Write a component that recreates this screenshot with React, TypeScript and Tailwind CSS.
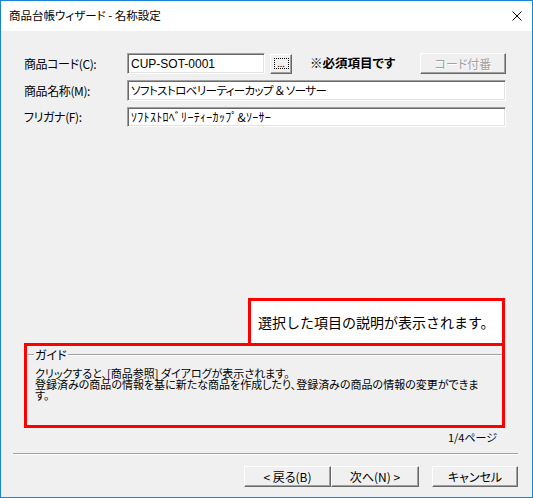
// 立体ボタン（Windows クラシック風）
const WinButton = ({ label, className = '', disabled = false }: { label: string; className?: string; disabled?: boolean }) => (
	<div
		className={`flex items-center justify-center h-[21px] bg-[#f0f0f0] border border-t-white border-l-white border-r-[#696969] border-b-[#696969] shadow-[inset_-1px_-1px_0_#a0a0a0] ${
			disabled ? 'text-[#a0a0a0] [text-shadow:1px_1px_0_#ffffff]' : 'text-black'
		} ${className}`}
	>
		{label}
	</div>
);

// 凹んだ入力欄
const Field = ({ value, className = '' }: { value: string; className?: string }) => (
	<div
		className={`flex items-center bg-white border border-t-[#a0a0a0] border-l-[#a0a0a0] border-r-white border-b-white shadow-[inset_1px_1px_0_#696969,inset_-1px_-1px_0_#e3e3e3] pl-[3px] whitespace-nowrap overflow-hidden ${className}`}
	>
		{value}
	</div>
);

const App = () => {
	return (
		<div className="w-[533px] h-[498px] flex flex-col border border-[#1883d7] bg-[#f0f0f0] text-[12px] text-black font-['Noto_Sans_CJK_JP',sans-serif] [font-feature-settings:'palt'] leading-none">
			{/* タイトルバー */}
			<header className="h-[30px] shrink-0 bg-white flex items-center justify-between pl-[8px] pr-[10px]">
				<span className="text-[11.5px]">商品台帳ウィザード - 名称設定</span>
				<svg width="10" height="10" viewBox="0 0 10 10" className="stroke-black">
					<path d="M0.5 0.5 L9.5 9.5 M9.5 0.5 L0.5 9.5" strokeWidth="1" />
				</svg>
			</header>

			<main className="flex-1 flex flex-col pl-[12px] pr-[14px] pb-[10px]">
				<section className="flex-1 flex flex-col ml-[11px] mr-[12px] pt-[22px]">
					<div className="flex items-center h-[21px]">
						<span className="w-[103px] tracking-[-0.4px]">商品コード(C):</span>
						<Field value="CUP-SOT-0001" className="w-[138px] h-[21px] font-['Liberation_Sans',sans-serif]" />
						<div className="ml-[5px] w-[22px] h-[20px] flex items-center justify-center bg-[#f0f0f0] border border-t-white border-l-white border-r-[#696969] border-b-[#696969] shadow-[inset_-1px_-1px_0_#a0a0a0]">
							<div className="w-[15px] h-[11px] border border-dotted border-black flex items-end justify-center text-[9px] leading-[8px]">...</div>
						</div>
						<span className="ml-[18px] font-bold text-[12.5px]">※必須項目です</span>
						<WinButton label="コード付番" disabled className="ml-auto w-[86px]" />
					</div>

					<div className="flex items-center h-[21px] mt-[6px]">
						<span className="w-[103px] tracking-[-0.4px]">商品名称(M):</span>
						<Field value="ソフトストロベリーティーカップ ＆ ソーサー" className="flex-1 h-[21px] text-[11.5px] tracking-[-0.6px]" />
					</div>

					<div className="flex items-center h-[20px] mt-[6px]">
						<span className="w-[103px] tracking-[-0.4px]">フリガナ(F):</span>
						<Field value="ｿﾌﾄｽﾄﾛﾍﾞﾘｰﾃｨｰｶｯﾌﾟ&ｿｰｻｰ" className="flex-1 h-[20px] tracking-[0.3px]" />
					</div>

					<div className="mt-auto mr-[1px] flex flex-col">
						<div className="self-end w-[257px] h-[45px] border-[3px] border-b-0 border-[#ff0000] bg-white flex items-center pl-[7px] text-[14px] [font-feature-settings:normal]">
							選択した項目の説明が表示されます。
						</div>
						<div className="h-[85px] border-[3px] border-[#ff0000] flex flex-col">
							<div className="flex items-center h-[12px] mt-[3px] pl-[1px]">
								<div className="w-[6px] h-[2px] border-t border-[#a0a0a0] border-b border-b-white" />
								<span className="px-[1px] text-[12px]">ガイド</span>
								<div className="flex-1 h-[2px] border-t border-[#a0a0a0] border-b border-b-white" />
							</div>
							<p className="mt-[7px] pl-[8px] text-[11px] leading-[11px] whitespace-nowrap">
								クリックすると、[商品参照] ダイアログが表示されます。
								<br />
								登録済みの商品の情報を基に新たな商品を作成したり、登録済みの商品の情報の変更ができま
								<br />
								す。
							</p>
						</div>
						<div className="mt-[2px] h-[14px] flex items-center justify-end pr-[8px] text-[11px]">1/4ページ</div>
					</div>
				</section>

				<div className="mt-[9px] h-[2px] border-t border-[#a0a0a0] border-b border-b-white" />

				<div className="mt-[11px] flex justify-end">
					<WinButton label="< 戻る(B)" className="w-[87px]" />
					<WinButton label="次へ(N) >" className="w-[88px]" />
					<WinButton label="キャンセル" className="ml-[13px] w-[86px]" />
				</div>
			</main>
		</div>
	);
};

export default App;
